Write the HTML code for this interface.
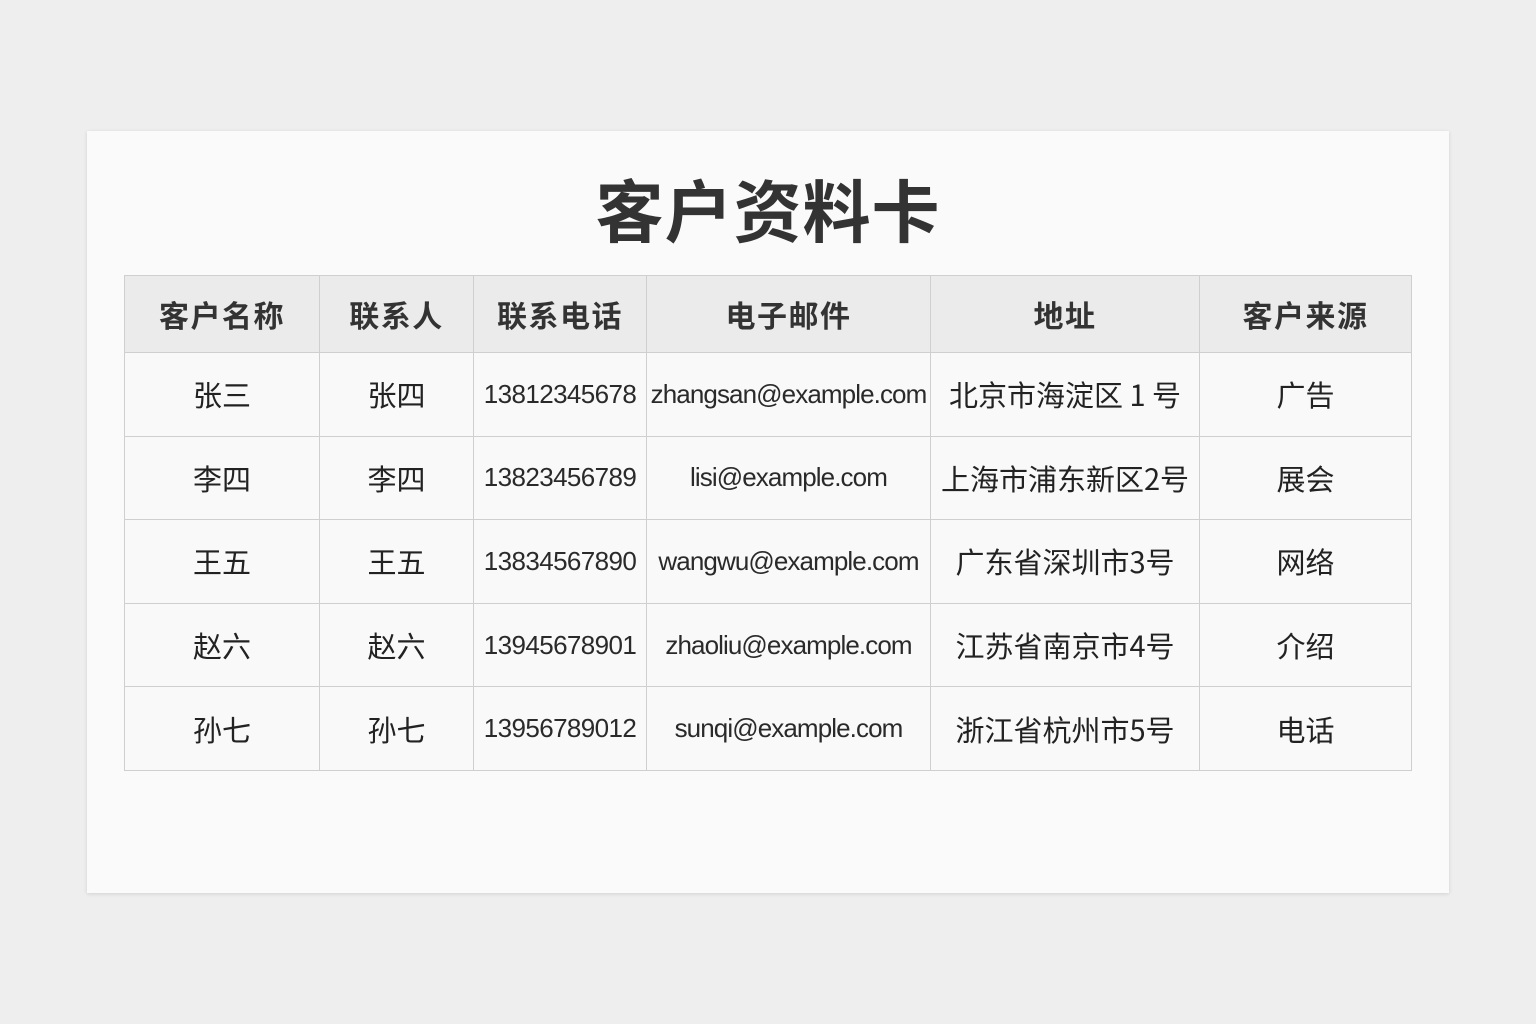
<!DOCTYPE html>
<html><head><meta charset="utf-8"><style>
html,body{margin:0;padding:0;width:1536px;height:1024px;background:#eeeeef;overflow:hidden;font-family:"Liberation Sans","Noto Sans CJK SC",sans-serif;}
.card{position:absolute;left:87px;top:131px;width:1362px;height:762px;background:#fafafa;box-shadow:0 1px 4px rgba(0,0,0,0.12);}
h1{position:absolute;left:0;right:0;top:166px;margin:0;text-align:center;font-size:68px;font-weight:bold;color:#333;letter-spacing:1px;line-height:84px;font-family:"Noto Sans CJK SC",sans-serif;}
table{position:absolute;left:124px;top:275px;border-collapse:collapse;table-layout:fixed;}
td,th{border:1.5px solid #cfcfcf;text-align:center;color:#222;padding:0;white-space:nowrap;overflow:hidden;}
th{height:76px;background:#ebebeb;font-size:30px;letter-spacing:1.5px;font-weight:bold;color:#333;font-family:"Noto Sans CJK SC",sans-serif;}
td{height:82.6px;font-size:29px;font-family:"Noto Sans CJK SC",sans-serif;background:#f9f9f9;}
td.n{font-family:"Liberation Sans",sans-serif;font-size:26px;letter-spacing:-0.6px;color:#2a2a2a;}
td.e{font-family:"Liberation Sans",sans-serif;font-size:26px;letter-spacing:-0.9px;color:#2a2a2a;}
</style></head><body>
<div class="card"></div>
<h1>客户资料卡</h1>
<table>
<colgroup><col style="width:195px"><col style="width:154px"><col style="width:173px"><col style="width:284px"><col style="width:269px"><col style="width:212px"></colgroup>
<tr><th>客户名称</th><th>联系人</th><th>联系电话</th><th>电子邮件</th><th>地址</th><th>客户来源</th></tr>
<tr><td>张三</td><td>张四</td><td class="n">13812345678</td><td class="e">zhangsan@example.com</td><td>北京市海淀区 1 号</td><td>广告</td></tr>
<tr><td>李四</td><td>李四</td><td class="n">13823456789</td><td class="e">lisi@example.com</td><td>上海市浦东新区2号</td><td>展会</td></tr>
<tr><td>王五</td><td>王五</td><td class="n">13834567890</td><td class="e">wangwu@example.com</td><td>广东省深圳市3号</td><td>网络</td></tr>
<tr><td>赵六</td><td>赵六</td><td class="n">13945678901</td><td class="e">zhaoliu@example.com</td><td>江苏省南京市4号</td><td>介绍</td></tr>
<tr><td>孙七</td><td>孙七</td><td class="n">13956789012</td><td class="e">sunqi@example.com</td><td>浙江省杭州市5号</td><td>电话</td></tr>
</table>
</body></html>
